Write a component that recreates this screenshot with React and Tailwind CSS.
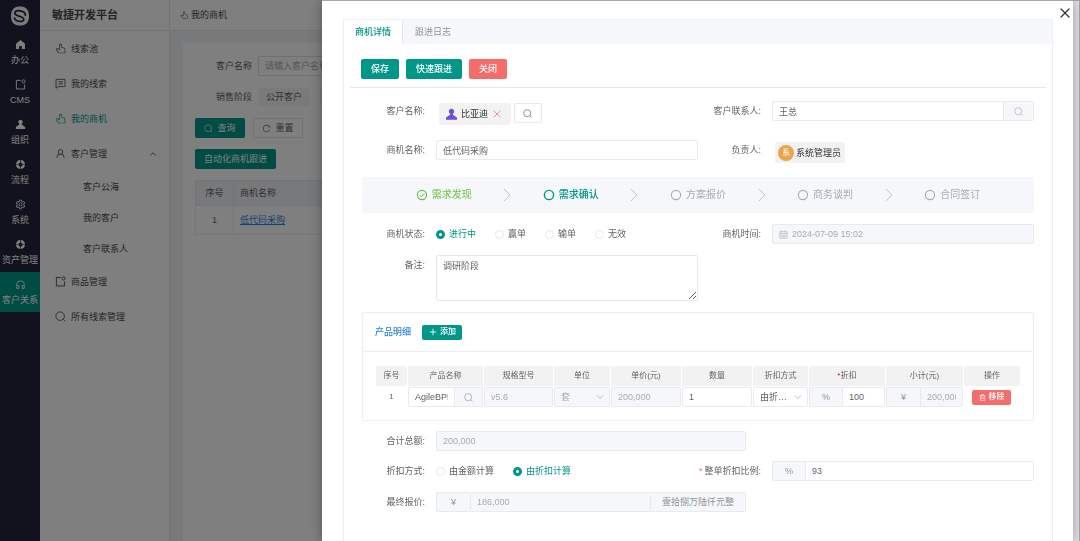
import React, { useState } from 'react';
import { AiOutlineCustomerService, AiOutlineReload, AiOutlineSetting, AiOutlineUser } from 'react-icons/ai';
import { ChevronDown, ChevronUp, Plus, X } from 'lucide-react';

const Glyph = ({ d, className }) => (
    <svg viewBox="0 0 1024 1024" fill="currentColor" className={className} aria-hidden="true">
        <path d={d} />
    </svg>
);

const PATHS = {
    pointer: 'M511.552 128c-35.584 0-64.384 28.8-64.384 64.448v516.48L274.048 570.88a94.272 94.272 0 0 0-112.896-3.456 44.416 44.416 0 0 0-8.96 62.208L332.8 870.4A64 64 0 0 0 384 896h512V575.232a64 64 0 0 0-45.632-61.312l-205.952-61.76A96 96 0 0 1 576 360.192V192.448C576 156.8 547.2 128 511.552 128M359.04 556.8l24.128 19.2V192.448a128.448 128.448 0 1 1 256.832 0v167.744a32 32 0 0 0 22.784 30.656l206.016 61.76A128 128 0 0 1 960 575.232V896a64 64 0 0 1-64 64H384a128 128 0 0 1-102.4-51.2L101.056 668.032A108.416 108.416 0 0 1 128 512.512a158.272 158.272 0 0 1 185.984 8.32z',
    home: 'M512 96 96 447.936V928h290V660H638v268h290V447.936z',
    member: 'M512 64a210 210 0 0 1 110 389v70l290 210a80 80 0 0 1 34 66v129H78V799a80 80 0 0 1 34-66l290-210v-70A210 210 0 0 1 512 64',
    ring: 'M926.784 480H701.312A192.512 192.512 0 0 0 544 322.688V97.216A416.064 416.064 0 0 1 926.784 480m0 64A416.064 416.064 0 0 1 544 926.784V701.312A192.512 192.512 0 0 0 701.312 544zM97.28 544h225.472A192.512 192.512 0 0 0 480 701.312v225.472A416.064 416.064 0 0 1 97.216 544zm0-64A416.064 416.064 0 0 1 480 97.216v225.472A192.512 192.512 0 0 0 322.688 480H97.216z',
};

const PointerIcon = ({ className }) => <Glyph d={PATHS.pointer} className={className} />;
const HomeIcon = ({ className }) => <Glyph d={PATHS.home} className={className} />;
const MemberIcon = ({ className }) => <Glyph d={PATHS.member} className={className} />;
const RingIcon = ({ className }) => <Glyph d={PATHS.ring} className={className} />;

const SearchIcon = ({ className }) => (
    <svg viewBox="0 0 16 16" fill="none" stroke="currentColor" strokeWidth="1.2" className={className} aria-hidden="true">
        <circle cx="7.5" cy="7.5" r="6.2" />
        <path d="M12 12l3.2 3.2" />
    </svg>
);

const BadgeBoxIcon = ({ className }) => (
    <svg viewBox="0 0 16 16" fill="none" stroke="currentColor" strokeWidth="1.3" className={className} aria-hidden="true">
        <path d="M8.5 2H2v12.5h12V8" />
        <circle cx="12.5" cy="3.5" r="2.3" />
    </svg>
);

const ChatIcon = ({ className }) => (
    <svg viewBox="0 0 16 16" fill="none" stroke="currentColor" strokeWidth="1.2" className={className} aria-hidden="true">
        <path d="M1.5 2h13v10.5H4.5L1.5 14.8zM5 5.5h6.5M5 8.5h6.5" />
    </svg>
);

const CalendarIcon = ({ className }) => (
    <svg viewBox="0 0 16 16" fill="none" stroke="currentColor" strokeWidth="1.1" className={className} aria-hidden="true">
        <path d="M1.5 3h13v11.5h-13zM1.5 6.5h13M5 1v3.5M11 1v3.5M4 9.5h8M4 12h8" />
    </svg>
);

const TrashIcon = ({ className }) => (
    <svg viewBox="0 0 16 16" fill="none" stroke="currentColor" strokeWidth="1.5" className={className} aria-hidden="true">
        <path d="M1.5 4h13M5.5 4V1.5h5V4M3 4v10.5h10V4M6.5 7v4.5M9.5 7v4.5" />
    </svg>
);

const Logo = () => (
    <svg viewBox="0 0 20 20" className="size-5" aria-hidden="true">
        <rect x="1" y="0.5" width="18" height="19" rx="8" fill="#f4f4f4" />
        <path d="M15.4 9.2C15.6 5 5.2 2.6 4.8 7c-.2 3.4 8.8 3 9 6.2.2 3.4-8 3-9.4-1.2" fill="none" stroke="#22243c" strokeWidth="1.7" strokeLinecap="round" />
    </svg>
);

const NAV = [
    { label: '办公', icon: HomeIcon },
    { label: 'CMS', icon: BadgeBoxIcon },
    { label: '组织', icon: MemberIcon },
    { label: '流程', icon: RingIcon },
    { label: '系统', icon: AiOutlineSetting },
    { label: '资产管理', icon: RingIcon },
    { label: '客户关系', icon: AiOutlineCustomerService, active: true },
];

const MENU = [
    { label: '线索池', icon: PointerIcon },
    { label: '我的线索', icon: ChatIcon },
    { label: '我的商机', icon: PointerIcon, active: true },
    { label: '客户管理', icon: AiOutlineUser, children: ['客户公海', '我的客户', '客户联系人'] },
    { label: '商品管理', icon: BadgeBoxIcon },
    { label: '所有线索管理', icon: SearchIcon },
];

const STEPS = ['需求发现', '需求确认', '方案报价', '商务谈判', '合同签订'];

const NavRail = () => (
    <nav className="w-10 shrink-0 bg-[#22243c] text-white">
        <div className="flex h-8 items-center justify-center">
            <Logo />
        </div>
        {NAV.map(({ label, icon: NavIcon, active }) => (
            <a key={label} href="#" className={`flex h-10 flex-col items-center justify-center gap-1 whitespace-nowrap ${active ? 'bg-[#009688]' : ''}`}>
                <NavIcon className="size-[11px]" />
                <span className="text-[9px] leading-3">{label}</span>
            </a>
        ))}
    </nav>
);

const SideMenu = () => (
    <aside className="w-[130px] shrink-0 border-r border-[#e6e6e6] bg-white text-[#48484c]">
        <h1 className="flex h-[31px] items-center border-b border-[#e8e8e8] pl-3 text-[11px] font-bold">敏捷开发平台</h1>
        {MENU.map(({ label, icon: MenuIcon, active, children }) => (
            <div key={label}>
                <a href="#" className={`flex h-[35px] items-center gap-[5px] pr-[11px] pl-[15px] ${active ? 'text-[#009688]' : ''}`}>
                    <MenuIcon className="size-[11px]" />
                    <span className="flex-1">{label}</span>
                    {children && <ChevronUp size={10} strokeWidth={2} />}
                </a>
                {children && children.map(child => (
                    <a key={child} href="#" className="flex h-[31px] items-center pl-[43px]">{child}</a>
                ))}
            </div>
        ))}
    </aside>
);

const ListPage = () => (
    <main className="flex min-w-0 flex-1 flex-col bg-[#f0f2f5] text-[#606266]">
        <div className="flex h-[31px] shrink-0 items-center gap-[3px] border-b border-[#e4e7ed] bg-white px-[10px] text-[#48484c]">
            <PointerIcon className="size-2" />
            我的商机
        </div>
        <div className="mt-3 ml-[13px] flex-1 bg-white pt-[13px] pl-3">
            <div className="flex h-5 items-center">
                <label htmlFor="filter-name" className="w-[57px] shrink-0 text-right">客户名称</label>
                <input id="filter-name" placeholder="请输入客户名称" className="ml-[6px] h-5 w-[180px] rounded-xs border border-[#dcdfe6] px-[6px] placeholder:text-[#a8abb2]" />
            </div>
            <div className="mt-3 flex h-[18px] items-center">
                <span className="w-[57px] shrink-0 text-right">销售阶段</span>
                <button type="button" className="ml-[6px] h-[18px] rounded-xs bg-[#f4f4f5] px-2">公开客户</button>
                <button type="button" className="ml-[10px] h-[18px] rounded-xs bg-[#f4f4f5] px-2">需求发现</button>
            </div>
            <div className="mt-3 flex gap-2">
                <button type="button" className="flex h-5 w-[50px] items-center justify-center gap-1 rounded-xs bg-[#009688] text-white">
                    <SearchIcon className="size-[9px]" />查询
                </button>
                <button type="button" className="flex h-5 w-[50px] items-center justify-center gap-1 rounded-xs border border-[#e4e7ed]">
                    <AiOutlineReload className="size-[9px]" />重置
                </button>
            </div>
            <button type="button" className="mt-[11px] h-5 rounded-xs bg-[#009688] px-[9px] text-white">自动化商机跟进</button>
            <table className="mt-[11px] w-full border-collapse text-left">
                <thead>
                    <tr className="h-[25px] bg-[#f0f2f5] text-[#606266]">
                        <th className="w-[38px] border border-[#e4e7ed] text-center font-normal">序号</th>
                        <th className="border border-[#e4e7ed] pl-[6px] font-normal">商机名称</th>
                    </tr>
                </thead>
                <tbody>
                    <tr className="h-[29px]">
                        <td className="border border-[#ebeef5] text-center">1</td>
                        <td className="border border-[#ebeef5] pl-[6px]"><a href="#" className="text-[#2f7de1] underline">低代码采购</a></td>
                    </tr>
                </tbody>
            </table>
        </div>
    </main>
);

const Field = ({ label, htmlFor, required, className = 'w-1/2', children }) => (
    <div className={`flex ${className}`}>
        <label htmlFor={htmlFor} className="h-5 w-[74px] shrink-0 pr-[11px] text-right leading-5 whitespace-nowrap">
            {required && <span className="mr-[2px] text-[#f56c6c]">*</span>}
            {label}:
        </label>
        <div className="flex min-w-0 flex-1">{children}</div>
    </div>
);

const RadioGroup = ({ name, options, value, onChange }) => (
    <div className="flex h-5 items-center gap-[19px]">
        {options.map(option => (
            <label key={option} className={`flex items-center gap-1 ${value === option ? 'text-[#009688]' : ''}`}>
                <input
                    type="radio"
                    name={name}
                    checked={value === option}
                    onChange={() => onChange(option)}
                    className="size-[9px] appearance-none rounded-full border border-[#e4e7ed] bg-white checked:border-[3px] checked:border-[#009688]"
                />
                {option}
            </label>
        ))}
    </div>
);

const Steps = ({ current }) => (
    <ol className="flex h-9 items-center rounded-xs bg-[#f5f7fa] px-[8%] text-[10px]">
        {STEPS.map((step, i) => {
            const last = i === STEPS.length - 1;
            const tone = i < current ? 'text-[#67c23a]' : i === current ? 'text-[#009688]' : 'text-[#a8abb2]';
            return (
                <li key={step} className={`flex items-center ${last ? '' : 'flex-1'} ${tone}`}>
                    <svg viewBox="0 0 12 12" fill="none" stroke="currentColor" className="mr-1 size-3" aria-hidden="true">
                        <circle cx="6" cy="6" r="4.6" strokeWidth={i === current ? 1.4 : 1.1} />
                        {i < current && <path d="M3.8 6.2l1.6 1.6 3-3.4" />}
                    </svg>
                    <span className={i === current ? 'font-medium' : ''}>{step}</span>
                    {!last && (
                        <svg viewBox="0 0 8 14" fill="none" stroke="#c0c4cc" className="mx-auto h-[14px] w-2" aria-hidden="true">
                            <path d="M1 1l6 6-6 6" />
                        </svg>
                    )}
                </li>
            );
        })}
    </ol>
);

const boxInput = 'h-5 w-full min-w-0 rounded-xs border border-[#e8eaef] bg-white px-[6px]';
const boxDisabled = 'h-5 w-full min-w-0 rounded-xs border border-[#e8eaef] bg-[#f5f7fa] px-[6px] text-[#a8abb2]';
const addon = 'flex h-5 shrink-0 items-center justify-center border border-[#e8eaef] bg-[#f5f7fa] text-[#909399]';
const headCell = 'h-5 bg-[#f2f2f2] p-0 text-[8px] font-normal';

const ProductTable = () => (
    <section className="mt-[11px] rounded-xs border border-[#ebeef5]">
        <div className="flex h-[39px] items-center gap-[11px] border-b border-[#ebeef5] px-3">
            <h2 className="font-medium text-[#3085d6]">产品明细</h2>
            <button type="button" className="flex h-[15px] items-center gap-[2px] rounded-xs bg-[#009688] px-[6px] text-[8px] font-medium text-white">
                <Plus size={10} />添加
            </button>
        </div>
        <div className="px-3 pt-[13px] pb-3">
            <table className="w-full table-fixed border-separate border-spacing-px">
                <thead>
                    <tr>
                        <th className={`${headCell} w-[31px]`}>序号</th>
                        <th className={`${headCell} w-[75px]`}>产品名称</th>
                        <th className={`${headCell} w-[69px]`}>规格型号</th>
                        <th className={`${headCell} w-[56px]`}>单位</th>
                        <th className={`${headCell} w-[70px]`}>单价(元)</th>
                        <th className={`${headCell} w-[70px]`}>数量</th>
                        <th className={`${headCell} w-[55px]`}>折扣方式</th>
                        <th className={`${headCell} w-[76px]`}><span className="text-red-600">*</span>折扣</th>
                        <th className={`${headCell} w-[77px]`}>小计(元)</th>
                        <th className={`${headCell} w-[56px]`}>操作</th>
                    </tr>
                </thead>
                <tbody>
                    <tr>
                        <td className="p-0 text-center text-[8px]">1</td>
                        <td className="p-0">
                            <div className="flex">
                                <input aria-label="产品名称" defaultValue="AgileBPM" className={`${boxInput} rounded-r-none`} />
                                <button type="button" aria-label="选择产品" className={`${addon} w-7 rounded-r-xs border-l-0`}><SearchIcon className="size-[9px]" /></button>
                            </div>
                        </td>
                        <td className="p-0"><input aria-label="规格型号" disabled defaultValue="v5.6" className={boxDisabled} /></td>
                        <td className="p-0">
                            <div className="relative">
                                <select aria-label="单位" disabled className={`${boxDisabled} block appearance-none opacity-100`}><option>套</option></select>
                                <ChevronDown size={12} strokeWidth={1.5} className="pointer-events-none absolute top-1 right-1 text-[#a8abb2]" />
                            </div>
                        </td>
                        <td className="p-0"><input aria-label="单价" disabled defaultValue="200,000" className={boxDisabled} /></td>
                        <td className="p-0"><input aria-label="数量" defaultValue="1" className={boxInput} /></td>
                        <td className="p-0">
                            <div className="relative">
                                <select aria-label="行折扣方式" className={`${boxInput} block appearance-none truncate pr-4`}><option>由折扣计算</option></select>
                                <ChevronDown size={12} strokeWidth={1.5} className="pointer-events-none absolute top-1 right-1 text-[#a8abb2]" />
                            </div>
                        </td>
                        <td className="p-0">
                            <div className="flex">
                                <span className={`${addon} w-[33px] rounded-l-xs border-r-0`}>%</span>
                                <input aria-label="折扣" defaultValue="100" className={`${boxInput} rounded-l-none`} />
                            </div>
                        </td>
                        <td className="p-0">
                            <div className="flex">
                                <span className={`${addon} w-[34px] rounded-l-xs border-r-0`}>¥</span>
                                <input aria-label="小计" disabled defaultValue="200,000" className={`${boxDisabled} rounded-l-none`} />
                            </div>
                        </td>
                        <td className="p-0">
                            <button type="button" className="mx-auto flex h-[15px] w-[39px] items-center justify-center gap-[2px] rounded-xs bg-[#f56c6c] text-[8px] font-medium text-white">
                                <TrashIcon className="size-[7px]" />移除
                            </button>
                        </td>
                    </tr>
                </tbody>
            </table>
        </div>
    </section>
);

const DetailForm = () => {
    const [status, setStatus] = useState('进行中');
    const [mode, setMode] = useState('由折扣计算');

    return (
        <div className="px-[18px] text-[#606266]">
            <div className="flex pt-[13px]">
                <Field label="客户名称">
                    <span className="mt-[2px] ml-[3px] flex h-[22px] items-center gap-[3px] rounded-xs bg-[#f2f2f2] pr-2 pl-[6px] whitespace-nowrap text-[#303133]">
                        <MemberIcon className="size-[13px] text-[#6d4ce0]" />
                        <span>比亚迪</span>
                        <button type="button" aria-label="移除客户"><X size={12} strokeWidth={1.5} className="text-[#f56c6c]" /></button>
                    </span>
                    <button type="button" aria-label="选择客户" className="mt-[2px] ml-[3px] flex h-5 w-7 items-center justify-center rounded-xs border border-[#e8eaef]">
                        <SearchIcon className="size-[9px]" />
                    </button>
                </Field>
                <Field label="客户联系人" htmlFor="contact">
                    <input id="contact" defaultValue="王总" className={`${boxInput} rounded-r-none`} />
                    <button type="button" aria-label="选择联系人" className={`${addon} w-[30px] rounded-r-xs border-l-0`}><SearchIcon className="size-[9px] text-[#a8abb2]" /></button>
                </Field>
            </div>
            <div className="flex pt-[15px]">
                <Field label="商机名称" htmlFor="opportunity">
                    <input id="opportunity" defaultValue="低代码采购" className={boxInput} />
                </Field>
                <Field label="负责人">
                    <span className="mt-[2px] ml-[3px] flex h-[21px] items-center gap-[2px] rounded-xs bg-[#f2f2f2] pr-1 pl-[3px] text-[#303133]">
                        <span className="flex size-4 items-center justify-center rounded-full bg-[#e9a54a] text-[8px] text-white">系</span>
                        系统管理员
                    </span>
                </Field>
            </div>
            <div className="mt-[14px]">
                <Steps current={1} />
            </div>
            <div className="flex pt-[11px]">
                <Field label="商机状态">
                    <RadioGroup name="status" options={['进行中', '赢单', '输单', '无效']} value={status} onChange={setStatus} />
                </Field>
                <Field label="商机时间" htmlFor="time">
                    <div className="flex h-5 flex-1 items-center gap-1 rounded-xs border border-[#e8eaef] bg-[#f5f7fa] px-[6px] text-[#a8abb2]">
                        <CalendarIcon className="size-[9px]" />
                        <input id="time" disabled defaultValue="2024-07-09 15:02" className="min-w-0 flex-1" />
                    </div>
                </Field>
            </div>
            <div className="pt-[11px]">
                <Field label="备注" htmlFor="remark">
                    <textarea id="remark" defaultValue="调研阶段" className="block h-[46px] w-full rounded-xs border border-[#e4e7ed] px-[6px] py-[3px] leading-[14px]" />
                </Field>
            </div>
            <ProductTable />
            <div className="pt-[10px]">
                <Field label="合计总额" htmlFor="total" className="w-4/7">
                    <input id="total" disabled defaultValue="200,000" className={boxDisabled} />
                </Field>
            </div>
            <div className="flex pt-[10px]">
                <Field label="折扣方式">
                    <RadioGroup name="mode" options={['由金额计算', '由折扣计算']} value={mode} onChange={setMode} />
                </Field>
                <Field label="整单折扣比例" htmlFor="ratio" required>
                    <span className={`${addon} w-[33px] rounded-l-xs border-r-0`}>%</span>
                    <input id="ratio" defaultValue="93" className={`${boxInput} rounded-l-none`} />
                </Field>
            </div>
            <div className="pt-[11px]">
                <Field label="最终报价" htmlFor="final" className="w-4/7">
                    <span className={`${addon} w-[34px] rounded-l-xs border-r-0`}>¥</span>
                    <input id="final" disabled defaultValue="186,000" className={`${boxDisabled} rounded-none`} />
                    <span className={`${addon} w-[95px] rounded-r-xs border-l-0`}>壹拾捌万陆仟元整</span>
                </Field>
            </div>
        </div>
    );
};

const Drawer = () => (
    <section role="dialog" aria-label="商机详情" className="relative flex w-[70%] flex-col border-t border-[#a8a8a8] bg-white pt-[18px] pr-5 pl-[21px] shadow-[0_0_12px_rgba(0,0,0,0.35)]">
        <button type="button" aria-label="关闭面板" className="absolute top-1 right-0 text-[#303133]"><X size={16} strokeWidth={1.8} /></button>
        <div className="flex flex-1 flex-col border border-b-0 border-[#ebeef5]">
            <div role="tablist" className="flex h-6 bg-[#f5f7fa] text-[#909399]">
                <button type="button" role="tab" aria-selected="true" className="border-r border-[#e4e7ed] bg-white px-[11px] font-medium text-[#009688]">商机详情</button>
                <button type="button" role="tab" aria-selected="false" className="px-3">跟进日志</button>
            </div>
            <div className="mx-[6px] flex gap-[7px] border-b border-[#e4e7ed] pt-[15px] pr-3 pb-2 pl-[11px] font-medium text-white">
                <button type="button" className="h-5 rounded-xs bg-[#009688] px-[10px]">保存</button>
                <button type="button" className="h-5 rounded-xs bg-[#009688] px-[10px]">快速跟进</button>
                <button type="button" className="h-5 rounded-xs bg-[#f56c6c] px-[10px]">关闭</button>
            </div>
            <DetailForm />
        </div>
    </section>
);

export default function App() {
    return (
        <div className="flex h-screen overflow-hidden font-['Liberation_Sans','Noto_Sans_CJK_SC',sans-serif] text-[9px] leading-3">
            <NavRail />
            <SideMenu />
            <ListPage />
            <div className="fixed inset-0 flex bg-black/50">
                <div className="flex flex-1 justify-end">
                    <Drawer />
                </div>
                <div className="w-[7px] border-t border-r border-[#a8a8a8] bg-[#e4e4e6]" />
            </div>
        </div>
    );
}
